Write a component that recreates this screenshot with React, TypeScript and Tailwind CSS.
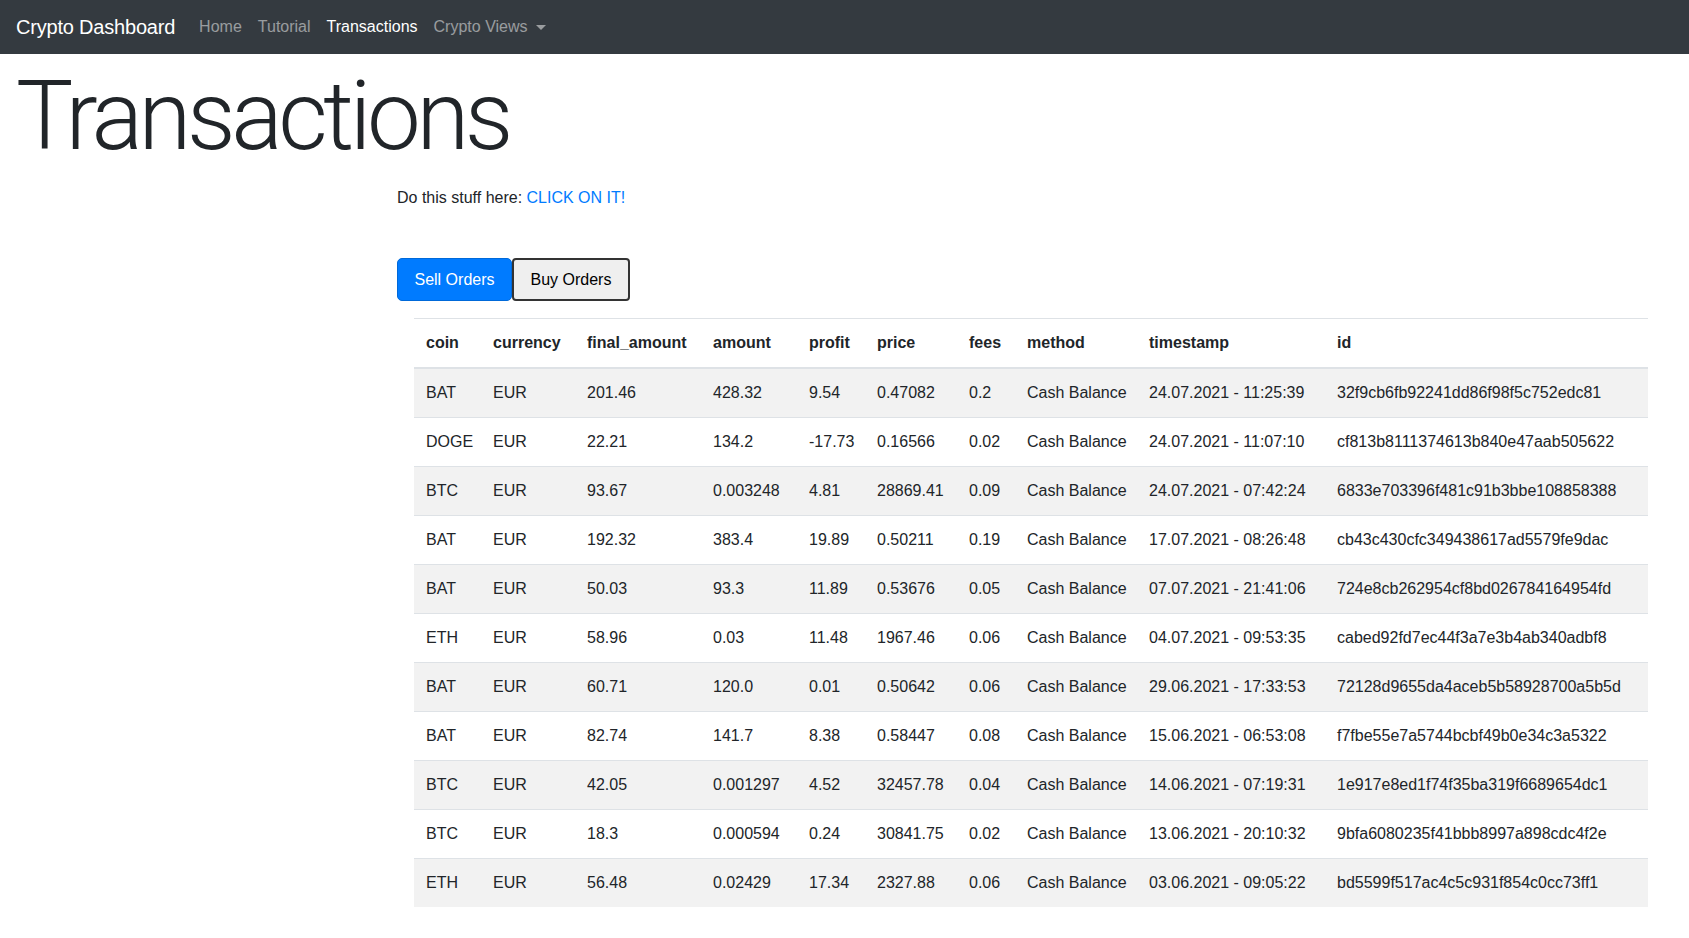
import React from 'react';

const columns = [
    { key: 'coin', width: 'w-[67px]' },
    { key: 'currency', width: 'w-[94px]' },
    { key: 'final_amount', width: 'w-[126px]' },
    { key: 'amount', width: 'w-[96px]' },
    { key: 'profit', width: 'w-[68px]' },
    { key: 'price', width: 'w-[92px]' },
    { key: 'fees', width: 'w-[58px]' },
    { key: 'method', width: 'w-[122px]' },
    { key: 'timestamp', width: 'w-[188px]' },
    { key: 'id', width: 'w-[323px]' },
];

const orders = [
    ['BAT', 'EUR', '201.46', '428.32', '9.54', '0.47082', '0.2', 'Cash Balance', '24.07.2021 - 11:25:39', '32f9cb6fb92241dd86f98f5c752edc81'],
    ['DOGE', 'EUR', '22.21', '134.2', '-17.73', '0.16566', '0.02', 'Cash Balance', '24.07.2021 - 11:07:10', 'cf813b8111374613b840e47aab505622'],
    ['BTC', 'EUR', '93.67', '0.003248', '4.81', '28869.41', '0.09', 'Cash Balance', '24.07.2021 - 07:42:24', '6833e703396f481c91b3bbe108858388'],
    ['BAT', 'EUR', '192.32', '383.4', '19.89', '0.50211', '0.19', 'Cash Balance', '17.07.2021 - 08:26:48', 'cb43c430cfc349438617ad5579fe9dac'],
    ['BAT', 'EUR', '50.03', '93.3', '11.89', '0.53676', '0.05', 'Cash Balance', '07.07.2021 - 21:41:06', '724e8cb262954cf8bd026784164954fd'],
    ['ETH', 'EUR', '58.96', '0.03', '11.48', '1967.46', '0.06', 'Cash Balance', '04.07.2021 - 09:53:35', 'cabed92fd7ec44f3a7e3b4ab340adbf8'],
    ['BAT', 'EUR', '60.71', '120.0', '0.01', '0.50642', '0.06', 'Cash Balance', '29.06.2021 - 17:33:53', '72128d9655da4aceb5b58928700a5b5d'],
    ['BAT', 'EUR', '82.74', '141.7', '8.38', '0.58447', '0.08', 'Cash Balance', '15.06.2021 - 06:53:08', 'f7fbe55e7a5744bcbf49b0e34c3a5322'],
    ['BTC', 'EUR', '42.05', '0.001297', '4.52', '32457.78', '0.04', 'Cash Balance', '14.06.2021 - 07:19:31', '1e917e8ed1f74f35ba319f6689654dc1'],
    ['BTC', 'EUR', '18.3', '0.000594', '0.24', '30841.75', '0.02', 'Cash Balance', '13.06.2021 - 20:10:32', '9bfa6080235f41bbb8997a898cdc4f2e'],
    ['ETH', 'EUR', '56.48', '0.02429', '17.34', '2327.88', '0.06', 'Cash Balance', '03.06.2021 - 09:05:22', 'bd5599f517ac4c5c931f854c0cc73ff1'],
];

function App() {
    return (
        <div className="min-h-screen bg-white text-[#212529] font-['Liberation_Sans',Arial,sans-serif]">
            <nav className="h-[54px] bg-[#343a40] flex items-center px-4">
                <span className="text-[20px] text-white tracking-[-0.2px] mr-4">Crypto Dashboard</span>
                <span className="px-2 text-base text-white/50">Home</span>
                <span className="px-2 text-base text-white/50">Tutorial</span>
                <span className="px-2 text-base text-white">Transactions</span>
                <span className="px-2 text-base text-white/50 flex items-center">
                    Crypto Views
                    <span className="ml-2 w-0 h-0 border-t-[5px] border-t-[#9a9da0] border-x-[5px] border-x-transparent" />
                </span>
            </nav>

            <h1 className="mt-[5px] ml-4 text-[96px] leading-[1.2] font-light tracking-[-4.4px] font-['Roboto',sans-serif]">
                Transactions
            </h1>

            <div className="ml-[397px]">
                <p className="mt-[12px] text-base leading-6">
                    Do this stuff here: <a className="text-[#007bff]">CLICK ON IT!</a>
                </p>

                <div className="mt-[48px] flex">
                    <button className="h-[43px] w-[115px] bg-[#007bff] text-white text-base rounded-[5px] border border-[#0069d9]">
                        Sell Orders
                    </button>
                    <button className="h-[43px] w-[118px] bg-[#efefef] text-black text-base rounded-[4px] border-2 border-[#333333]">
                        Buy Orders
                    </button>
                </div>

                <div className="mt-[17px] ml-[17px]">
                    <table className="w-[1234px] table-fixed border-collapse text-base">
                        <colgroup>
                            {columns.map(c => (
                                <col key={c.key} className={c.width} />
                            ))}
                        </colgroup>
                        <thead>
                            <tr>
                                {columns.map(c => (
                                    <th key={c.key} className="px-3 py-3 h-[48px] leading-6 text-left font-bold border-t border-b-2 border-[#dee2e6] whitespace-nowrap">
                                        {c.key}
                                    </th>
                                ))}
                            </tr>
                        </thead>
                        <tbody>
                            {orders.map((row, i) => (
                                <tr key={row[9]} className={i % 2 === 0 ? 'bg-[#f2f2f2]' : ''}>
                                    {row.map((cell, j) => (
                                        <td key={j} className="px-3 py-3 leading-6 border-t border-[#dee2e6] whitespace-nowrap">
                                            {cell}
                                        </td>
                                    ))}
                                </tr>
                            ))}
                        </tbody>
                    </table>
                </div>
            </div>
        </div>
    );
}

export default App;
